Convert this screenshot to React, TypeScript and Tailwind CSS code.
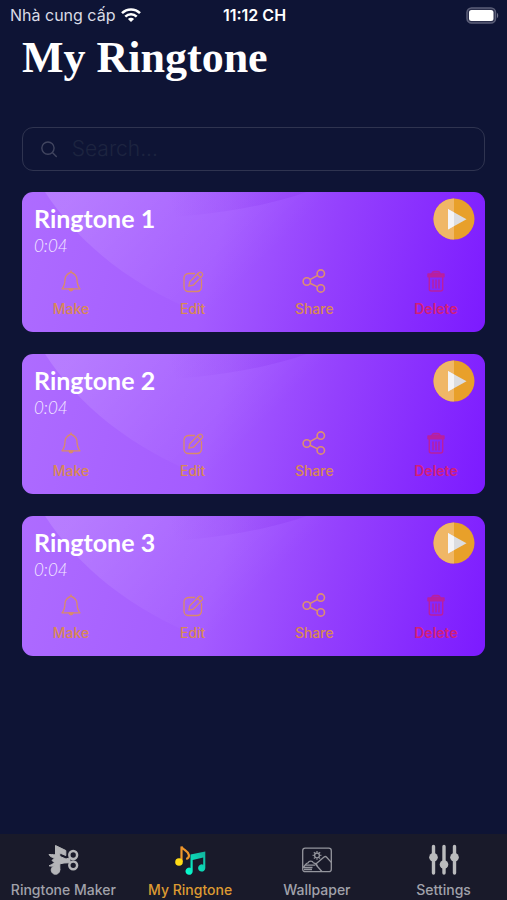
import React from "react";

const ringtones = [
  { id: 1, name: "Ringtone 1", length: "0:04" },
  { id: 2, name: "Ringtone 2", length: "0:04" },
  { id: 3, name: "Ringtone 3", length: "0:04" },
];

function WifiIcon() {
  return (
    <svg width="20" height="14" viewBox="0 0 20 14" fill="none" stroke="#fff" strokeWidth="2.5" aria-hidden="true">
      <path d="M1 5.2C6 .2 14 .2 19 5.2" />
      <path d="M4.3 8.600c3.200-3.200 8.200-3.200 11.400 0" />
      <path d="M10 14 6.900 10.900c1.700-1.600 4.500-1.600 6.200 0z" fill="#fff" stroke="none" />
    </svg>
  );
}

function BatteryIcon() {
  return (
    <svg width="33" height="17" viewBox="0 0 33 17" fill="none" aria-hidden="true">
      <rect x="1" y="1" width="28.500" height="15" rx="4.500" fill="#2b2f4c" stroke="#5b5e78" strokeWidth="1.500" />
      <rect x="3" y="3" width="24.500" height="11" rx="2.500" fill="#fff" />
      <path d="M31 6v5c1.600-.6 1.600-4.400 0-5z" fill="#6d7088" />
    </svg>
  );
}

function SearchIcon() {
  return (
    <svg width="18" height="18" viewBox="0 0 18 18" fill="none" stroke="#41455f" strokeWidth="1.500" strokeLinecap="round" aria-hidden="true">
      <circle cx="7.500" cy="8" r="6.600" />
      <path d="m12.500 13 4 4" />
    </svg>
  );
}

function BellIcon() {
  return (
    <svg width="24" height="24" viewBox="0 0 24 24" fill="none" stroke="currentColor" strokeWidth="1.300" strokeLinejoin="round" strokeLinecap="round" aria-hidden="true">
      <path d="M12 2v1.200C8.500 4.800 6 6.800 6 10.500c0 4-.6 6.500-3 9.300h18c-2.400-2.800-3-5.300-3-9.300 0-3.700-2.500-5.700-6-7.300" />
      <path d="M10 20c.4 2.300 3.600 2.300 4 0z" fill="currentColor" />
    </svg>
  );
}

function EditIcon() {
  return (
    <svg width="24" height="24" viewBox="0 0 24 24" fill="none" stroke="currentColor" strokeWidth="1.300" strokeLinejoin="round" strokeLinecap="round" aria-hidden="true">
      <path d="M13.500 4.500h-6a4.500 4.500 0 0 0-4.500 4.500v9a4.500 4.500 0 0 0 4.500 4.500h8.500a4.500 4.500 0 0 0 4.500-4.500v-7.500" />
      <path d="m7.800 17.200 1-4.500 9.100-9c1.900-1.700 5 1.100 3.300 3.200L12.300 16.200z" />
      <path d="m16.400 5.200 3.300 3.300" />
    </svg>
  );
}

function ShareIcon() {
  return (
    <svg width="24" height="24" viewBox="0 0 24 24" fill="none" stroke="currentColor" strokeWidth="1.600" aria-hidden="true">
      <circle cx="4.800" cy="12.500" r="3.700" />
      <circle cx="18.800" cy="4.600" r="3.700" />
      <circle cx="18.800" cy="19.400" r="3.700" />
      <path d="m8 10.600 7.600-4.200M8 14.300l7.600 3.600" />
    </svg>
  );
}

function TrashIcon() {
  return (
    <svg width="24" height="24" viewBox="0 0 24 24" fill="none" stroke="currentColor" strokeWidth="1.400" strokeLinejoin="round" aria-hidden="true">
      <path d="M4 5h16v2.800H4z" fill="currentColor" />
      <path d="M7.500 5c.6-1.700 1.500-2.500 2.500-2.500h4c1 0 1.900.8 2.500 2.500z" fill="currentColor" fillOpacity="0.500" />
      <path d="M5.300 8v12a2 2 0 0 0 2 2h9.400a2 2 0 0 0 2-2V8" />
      <path d="M9 10.500v9M12 10.500v9M15 10.500v9" />
    </svg>
  );
}

function PlayIcon() {
  return (
    <svg width="42" height="42" viewBox="0 0 42 42" aria-hidden="true">
      <circle cx="21" cy="21" r="20.500" fill="#e8a02a" />
      <path d="M21 .5a20.500 20.500 0 0 0 0 41z" fill="#f0b766" />
      <path d="M15 11v20.500L33.500 21.200z" fill="#dcdde0" />
      <path d="M15 11v20.500L21 28.100V14.400z" fill="#f4f4f6" />
    </svg>
  );
}

function CutNoteIcon() {
  return (
    <svg width="32" height="32" viewBox="0 0 32 32" fill="none" stroke="#b4b5b8" aria-hidden="true">
      <g fill="#b4b5b8" strokeLinejoin="round">
        <path d="M8.500 1.500 18.800 6.500v5L12.800 9v17H8.500z" strokeWidth="1" />
        <path d="M2 10.500c3 .2 6.500-.2 9 1.200l8 3.300 4-1.300v5l-6 .3-5 1c-3.500 2-7 2.700-10 1.800 2-.7 4-1.700 5.500-3.300L5 16.500l2.500-2.500c-2.500-.5-4.500-1.500-5.500-3.500z" strokeWidth="1" />
        <circle cx="8.500" cy="26" r="4.300" strokeWidth="1" />
      </g>
      <circle cx="26.200" cy="11" r="3.900" strokeWidth="2.500" />
      <circle cx="26.200" cy="21.300" r="3.900" strokeWidth="2.500" />
    </svg>
  );
}

function NotesIcon() {
  return (
    <svg width="32" height="32" viewBox="0 0 32 32" fill="none" aria-hidden="true">
      <defs>
        <linearGradient id="noteTeal" x1="0" y1="1" x2="1" y2="0">
          <stop offset="0" stopColor="#08ffd2" />
          <stop offset="1" stopColor="#12b39c" />
        </linearGradient>
      </defs>
      <path d="M7.500 18V2.500c1.200 3.600 6.800 4.200 7.400 8.500.3 2-1 3.500-2.700 4" stroke="#ef962b" strokeWidth="2.200" />
      <circle cx="5" cy="18" r="3.800" fill="#ffdc16" />
      <path d="M16.500 10.500 31.300 7.500v16.500a3.600 3.600 0 1 1-2.100-3.300v-7.100l-10.500 2.300v11.300a3.600 3.600 0 1 1-2.200-3.300z" fill="url(#noteTeal)" />
    </svg>
  );
}

function WallpaperIcon() {
  return (
    <svg width="32" height="32" viewBox="0 0 32 32" fill="none" stroke="#94959d" strokeWidth="1.300" strokeLinejoin="round" aria-hidden="true">
      <rect x="1.700" y="4.200" width="28.600" height="23.500" rx="2.500" />
      <circle cx="16" cy="11.400" r="2.400" />
      <path d="M16 7v1.200M16 14.600v1.200M11.600 11.400h1.200M19.200 11.400h1.200M12.900 8.300l.9.9M18.200 13.600l.9.9M12.900 14.500l.9-.9M18.200 9.200l.9-.9" />
      <path d="m14.500 20.300 8.600-7.300c.8-.6 1.700-.6 2.300 0l4.900 5.400M14.500 20.300l6.400 7.200" />
      <path d="M1.700 23.500c2.500-1 2.500-4.300 5.300-4.600 1-2.500 4.500-2.500 5.400 0 2.200 0 3.200 1.400 4.100 2.800M4 21.200h10M2.500 23.500h9M3 25.500h8" />
    </svg>
  );
}

function SlidersIcon() {
  return (
    <svg width="32" height="32" viewBox="0 0 32 32" stroke="#babbbd" strokeWidth="3.400" strokeLinecap="round" aria-hidden="true">
      <path d="M5.500 2.500v26.500M16 2.500v26.500M26.500 2.500v26.500" />
      <g fill="#babbbd" stroke="none">
        <circle cx="5.500" cy="13.200" r="4.300" />
        <circle cx="16" cy="20.500" r="4.300" />
        <circle cx="26.500" cy="13.200" r="4.300" />
      </g>
    </svg>
  );
}

const actions = [
  { label: "Make", Icon: BellIcon, color: "text-[#d98b68]" },
  { label: "Edit", Icon: EditIcon, color: "text-[#d98b68]" },
  { label: "Share", Icon: ShareIcon, color: "text-[#dd8f70]" },
  { label: "Delete", Icon: TrashIcon, color: "text-[#b8209f]" },
];

const tabs = [
  { label: "Ringtone Maker", Icon: CutNoteIcon },
  { label: "My Ringtone", Icon: NotesIcon },
  { label: "Wallpaper", Icon: WallpaperIcon },
  { label: "Settings", Icon: SlidersIcon },
];

function CardBackdrop({ id }: { id: number }) {
  const sheen = "sheen" + id;
  const fold = "fold" + id;
  return (
    <svg className="absolute inset-0 h-full w-full" viewBox="0 0 462 140" preserveAspectRatio="none" aria-hidden="true">
      <defs>
        <linearGradient id={sheen} gradientUnits="userSpaceOnUse" x1="60" y1="0" x2="185" y2="125">
          <stop offset="0" stopColor="#fff" stopOpacity="0.130" />
          <stop offset="1" stopColor="#fff" stopOpacity="0" />
        </linearGradient>
        <linearGradient id={fold} gradientUnits="userSpaceOnUse" x1="150" y1="20" x2="260" y2="0">
          <stop offset="0" stopColor="#8a35f0" stopOpacity="0" />
          <stop offset="1" stopColor="#8a35f0" stopOpacity="0.300" />
        </linearGradient>
      </defs>
      <path d="M23 0C55 50 110 95 180 122L462 140V0z" fill={`url(#${sheen})`} />
      <path d="M110 0H284C245 14 190 24 110 28z" fill={`url(#${fold})`} />
    </svg>
  );
}

function RingtoneCard({ id, name, length }: { id: number; name: string; length: string }) {
  return (
    <li className="relative overflow-hidden rounded-[11px] bg-[linear-gradient(105deg,#ae6cff_0%,#a45cff_42%,#9440fd_65%,#7c1aff_100%)]">
      <CardBackdrop id={id} />
      <div className="relative px-3 pt-[6px] pb-[13px]">
        <div className="flex items-start justify-between">
          <div className="flex flex-col pt-[5px]">
            <h2 className="font-['Lato',sans-serif] text-[25px] leading-[30px] font-bold text-white">{name}</h2>
            <span className="font-['Lato',sans-serif] text-[17px] leading-[26px] font-light text-[#f3e8ff] italic">{length}</span>
          </div>
          <button type="button" aria-label={`Play ${name}`} className="-mr-[2px]">
            <PlayIcon />
          </button>
        </div>
        <div className="mt-[10px] flex justify-between">
          {actions.map(({ label, Icon, color }) => (
            <button key={label} type="button" className={`flex w-[74px] flex-col items-center gap-[6px] ${color}`}>
              <Icon />
              <span
                className={
                  label === "Delete"
                    ? "font-['Inter',sans-serif] text-[14px] leading-5 font-semibold text-[#d32078]"
                    : "font-['Inter',sans-serif] text-[14px] leading-5 font-medium text-[#d98954]"
                }
              >
                {label}
              </span>
            </button>
          ))}
        </div>
      </div>
    </li>
  );
}

export default function App() {
  return (
    <div className="flex min-h-screen flex-col bg-[#0e1435] font-['Inter',sans-serif]">
      <header className="grid h-[30px] grid-cols-3 items-center pr-2 pl-[10px] text-white">
        <div className="flex items-center gap-[6px] text-[16px] whitespace-nowrap text-[#d9dbe6]">
          <span>Nhà cung cấp</span>
          <WifiIcon />
        </div>
        <span className="text-center text-[16px] font-semibold">11:12 CH</span>
        <div className="flex justify-end">
          <BatteryIcon />
        </div>
      </header>

      <main className="flex-1 px-[22px]">
        <h1 className="font-['Liberation_Serif',serif] text-[44px] leading-[56px] font-bold text-white">My Ringtone</h1>
        <label className="mt-[41px] flex h-11 items-center gap-[14px] rounded-[11px] border border-[#2f3450] pr-4 pl-[18px]">
          <SearchIcon />
          <input
            type="search"
            aria-label="Search"
            placeholder="Search..."
            className="w-full bg-transparent text-[21px] font-light text-white outline-none placeholder:text-[#1d2440]"
          />
        </label>
        <ul className="mt-[21px] flex flex-col gap-[22px] pb-6">
          {ringtones.map((ringtone) => (
            <RingtoneCard key={ringtone.id} {...ringtone} />
          ))}
        </ul>
      </main>

      <nav className="grid grid-cols-4 bg-[#191a2a] pt-[10px]">
        {tabs.map(({ label, Icon }) => (
          <a
            key={label}
            href="#"
            aria-current={label === "My Ringtone" ? "page" : undefined}
            className={
              label === "My Ringtone"
                ? "flex flex-col items-center gap-1 text-[#dd9b32]"
                : "flex flex-col items-center gap-1 text-[#a1a2aa]"
            }
          >
            <Icon />
            <span className="text-[14px] leading-5 font-medium whitespace-nowrap">{label}</span>
          </a>
        ))}
      </nav>
    </div>
  );
}
